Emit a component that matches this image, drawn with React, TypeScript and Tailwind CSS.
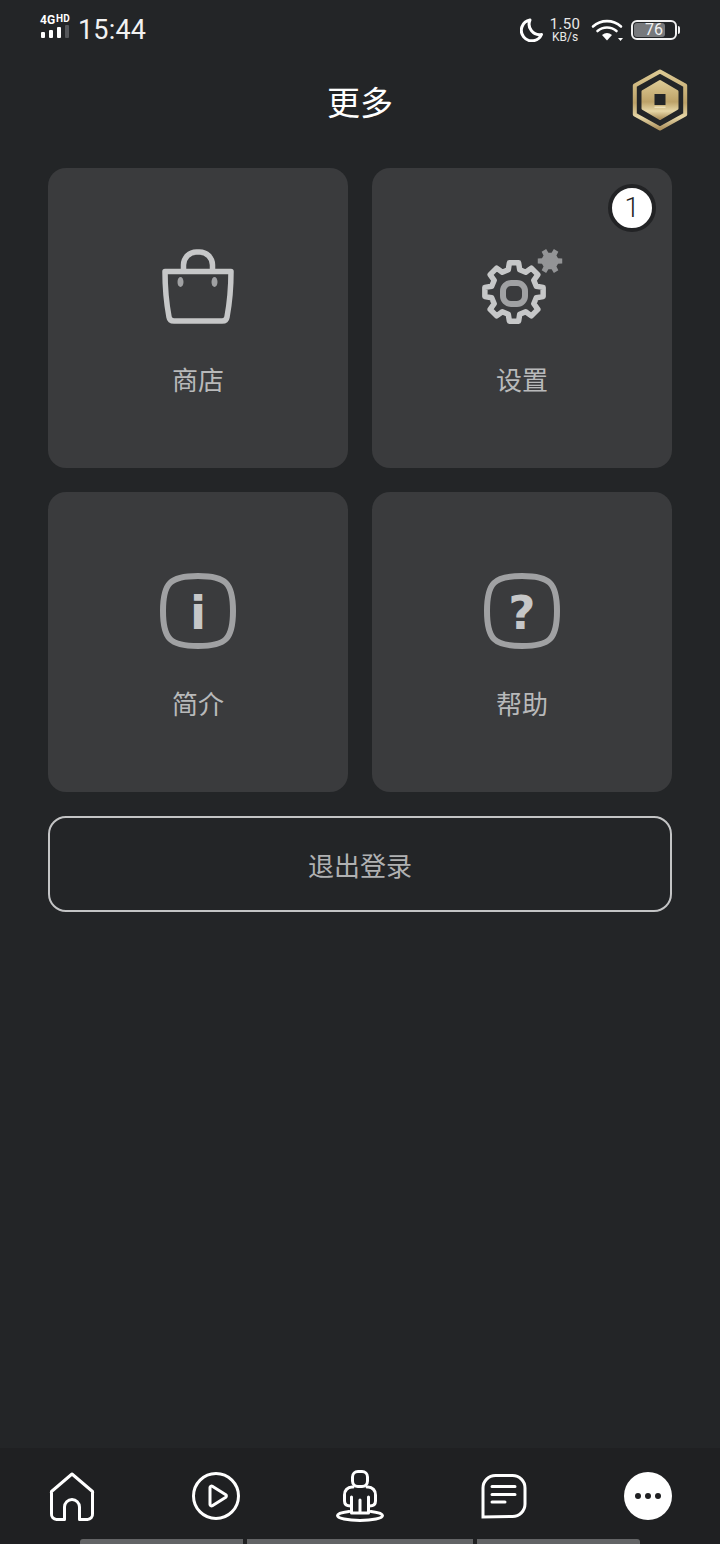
const cjk = "font-['Roboto','Noto_Sans_CJK_SC',sans-serif]"

// builds a cog outline: flat-topped teeth round a centre point
const cogPath = (cx: number, cy: number, outer: number, inner: number, teeth: number, start: number) => {
  const step = 360 / teeth
  const pt = (deg: number, r: number) => {
    const a = (deg * Math.PI) / 180
    return `${(cx + r * Math.cos(a)).toFixed(2)} ${(cy + r * Math.sin(a)).toFixed(2)}`
  }
  const parts: string[] = []
  for (let i = 0; i < teeth; i++) {
    const a = start + i * step
    parts.push(pt(a - step * 0.2, outer), pt(a + step * 0.2, outer), pt(a + step * 0.32, inner), pt(a + step * 0.68, inner))
  }
  return `M${parts.join('L')}Z`
}

const StatusBar = () => (
  <div className="flex h-14 items-center justify-between pt-[4px] pl-10 pr-10 text-white font-['Roboto',sans-serif]">
    <div className="flex items-center">
      <div className="mb-[8px] flex w-[31px] flex-col">
        <div className="flex h-[12px] items-end text-[12px] leading-none font-bold">
          4G<span className="mb-[2px] ml-[1px] text-[10px] leading-none">HD</span>
        </div>
        <div className="-mt-[1px] flex h-[13px] items-end gap-[4px] pl-[1px]">
          <span className="h-[6px] w-[4px] rounded-[1px] bg-white" />
          <span className="h-[8px] w-[4px] rounded-[1px] bg-white" />
          <span className="h-[11px] w-[4px] rounded-[1px] bg-white" />
          <span className="h-[13px] w-[4px] rounded-[1px] bg-[#55575a]" />
        </div>
      </div>
      <span className="ml-[7px] text-[27px] leading-none tracking-[0.2px] text-[#f2f2f2]">15:44</span>
    </div>
    <div className="flex items-center">
      <svg width="24" height="24" viewBox="0 0 24 24" className="mr-[5px]">
        <path d="M10 2a10.500 10.500 0 0 0 11.500 14.500A10.500 10.500 0 1 1 10 2Z" fill="none" stroke="#fff" strokeWidth="3" strokeLinejoin="round" />
      </svg>
      <div className="flex w-[32px] flex-col items-center text-center leading-none">
        <span className="text-[15px] leading-[14px] tracking-[0.3px] text-[#e8e8e8]">1.50</span>
        <span className="text-[12px] leading-[12px] text-[#e8e8e8]">KB/s</span>
      </div>
      <svg width="34" height="24" viewBox="0 0 34 24" className="ml-[10px]">
        <g fill="none" stroke="#fff" strokeWidth="2.6" strokeLinecap="round">
          <path d="M2 8.500a21 21 0 0 1 28 0" />
          <path d="M6.500 13a14.500 14.500 0 0 1 19 0" />
        </g>
        <path d="M11 17a8 8 0 0 1 10 0l-5 5.500Z" fill="#fff" />
        <path d="M27 20h5l-2.500 3Z" fill="#fff" />
      </svg>
      <div className="relative ml-[6px] flex h-[20px] w-[46px] items-center overflow-hidden rounded-[6px] border-2 border-[#f2f2f2] p-[1px]">
        <div className="h-full w-[31px] rounded-[3px] bg-[#77797c]" />
        <span className="absolute inset-0 flex items-center justify-center text-[16px] leading-none text-[#f2f2f2]">76</span>
      </div>
      <span className="ml-[1px] h-[8px] w-[2px] rounded-r-sm bg-[#f2f2f2]" />
    </div>
  </div>
)

const CoinIcon = () => (
  <svg width="58" height="64" viewBox="0 0 58 64">
    <defs>
      <linearGradient id="gold" x1="0" y1="0" x2="0" y2="1">
        <stop offset="0" stopColor="#dcc993" />
        <stop offset="0.55" stopColor="#bda268" />
        <stop offset="0.8" stopColor="#e6d6a6" />
        <stop offset="1" stopColor="#ae9360" />
      </linearGradient>
    </defs>
    <path d="M29 2.500 54.200 16.500V45.500L29 59.500 3.800 45.500V16.500Z" fill="none" stroke="url(#gold)" strokeWidth="4" strokeLinejoin="round" />
    <path d="M29 12.500 46 22.500V39.500L29 49.500 12 39.500V22.500Z" fill="url(#gold)" stroke="url(#gold)" strokeWidth="3" strokeLinejoin="round" />
    <rect x="23.500" y="25" width="11" height="11" fill="#232527" />
    <rect x="23.500" y="37.500" width="11" height="1.500" fill="#eee0b8" />
  </svg>
)

const BagIcon = () => (
  <svg width="72" height="80" viewBox="0 0 72 80" fill="none">
    <path d="M21.500 24v-6a13 13 0 0 1 13-13h3a13 13 0 0 1 13 13v6" stroke="#c6c7c8" strokeWidth="5.500" />
    <path d="M3 24.500h66c0 15-1.500 32-4 45.500-.4 2.600-2.300 4-4.800 4H12c-2.600 0-4.600-1.500-5-4-2.500-13.500-4-30.500-4-45.500Z" stroke="#c6c7c8" strokeWidth="5.500" strokeLinejoin="round" />
    <ellipse cx="18.500" cy="35" rx="3" ry="5" fill="#a0a1a3" />
    <ellipse cx="52.500" cy="35" rx="3" ry="5" fill="#a0a1a3" />
  </svg>
)

const GearIcon = () => (
  <svg width="84" height="80" viewBox="0 0 84 80" fill="none">
    <path d={cogPath(34, 45, 29.500, 23, 8, -90)} stroke="#c6c7c8" strokeWidth="5.500" strokeLinejoin="round" />
    <rect x="23" y="36" width="22" height="21" rx="8" stroke="#a0a1a3" strokeWidth="6" />
    <path d={cogPath(70, 14, 12.500, 8.500, 6, 0)} fill="#939496" strokeLinejoin="round" />
  </svg>
)

const SquircleIcon = ({ glyph }: { glyph: string }) => (
  <svg width="76" height="76" viewBox="0 0 76 76" fill="none">
    <path d="M38 3C66 3 73 10 73 38S66 73 38 73 3 66 3 38 10 3 38 3Z" stroke="#a0a1a3" strokeWidth="6" />
    <text x="38" y="56" textAnchor="middle" className="fill-[#c6c7c8] font-['DejaVu_Sans',sans-serif] text-[47px] font-bold">
      {glyph}
    </text>
  </svg>
)

const Card = ({ label, icon, badge }: { label: string; icon: React.ReactNode; badge?: string }) => (
  <div className="relative flex h-[300px] flex-col items-center rounded-[18px] bg-[#3a3b3d]">
    <div className="mt-[79px] flex h-[80px] items-center justify-center">{icon}</div>
    <span className={`mt-[36px] text-[26px] leading-[36px] text-[#b8b9ba] ${cjk}`}>{label}</span>
    {badge && (
      <span className="absolute top-[16px] right-[16px] flex h-[48px] w-[48px] items-center justify-center rounded-full border-[4px] border-[#222325] bg-white font-['Roboto',sans-serif] text-[27px] leading-none font-light text-[#222]">
        {badge}
      </span>
    )}
  </div>
)

const BottomNav = () => (
  <div className="flex h-[96px] flex-col bg-[#1f2022]">
    <div className="mt-[20px] flex h-[56px] items-center justify-between pl-[48px] pr-[48px]">
      <svg width="48" height="52" viewBox="0 0 48 52" fill="none" stroke="#fff" strokeWidth="3" strokeLinejoin="round">
        <path d="M24 4 44.500 21.500a3 3 0 0 1 0 2V44a5 5 0 0 1-5 5.500H31.500V37a7.500 7.500 0 0 0-15 0v12.500H8.500a5 5 0 0 1-5-5.500V23.500a3 3 0 0 1 0-2Z" />
      </svg>
      <svg width="48" height="48" viewBox="0 0 48 48" fill="none" stroke="#fff" strokeWidth="3" strokeLinejoin="round">
        <circle cx="24" cy="24" r="22.500" />
        <path d="M18 15.500v17a1.500 1.500 0 0 0 2.300 1.200l13.500-8.500a1.500 1.500 0 0 0 0-2.400l-13.500-8.500A1.500 1.500 0 0 0 18 15.500Z" />
      </svg>
      <svg width="48" height="52" viewBox="0 0 48 52" fill="none" stroke="#fff" strokeWidth="3" strokeLinejoin="round" strokeLinecap="round">
        <rect x="16.500" y="1.500" width="15" height="15" rx="5.500" />
        <path d="M17 17h-1a7.500 7.500 0 0 0-7.500 8v6c0 3 2 5 6 5M31 17h1a7.500 7.500 0 0 1 7.500 8v6c0 3-2 5-6 5" />
        <path d="M15.500 27v16h17V27M24 30v13" />
        <path d="M13 41.500C6 42.300 1.500 43.800 1.500 45.500c0 2.800 10 5 22.500 5s22.500-2.200 22.500-5c0-1.700-4.500-3.200-11.500-4" />
      </svg>
      <svg width="48" height="48" viewBox="0 0 48 48" fill="none" stroke="#fff" strokeWidth="3">
        <path d="M3 45V16A12.500 12.500 0 0 1 15.500 3.500h17A12.500 12.500 0 0 1 45 16v16a12.500 12.500 0 0 1-12.500 12.500Z" />
        <path d="M12 14.500h23M12 22.500h23M12 30h13" strokeLinecap="round" />
      </svg>
      <div className="flex h-[48px] w-[48px] items-center justify-center gap-[4px] rounded-full bg-white">
        <span className="h-[6px] w-[6px] rounded-full bg-[#1f2022]" />
        <span className="h-[6px] w-[6px] rounded-full bg-[#1f2022]" />
        <span className="h-[6px] w-[6px] rounded-full bg-[#1f2022]" />
      </div>
    </div>
    <div className="mt-auto flex h-[5px] gap-[4px] pl-[80px] pr-[80px]">
      <span className="w-[163px] rounded-tl-[3px] bg-[#636466]" />
      <span className="w-[226px] bg-[#636466]" />
      <span className="w-[163px] rounded-tr-[3px] bg-[#636466]" />
    </div>
  </div>
)

export default function App() {
  return (
    <div className={`flex h-[1544px] w-[720px] flex-col bg-[#232527] ${cjk}`}>
      <StatusBar />
      <header className="relative flex h-[88px] items-center justify-center">
        <h1 className="mt-[6px] text-[33px] leading-none font-normal text-white">更多</h1>
        <div className="absolute top-[13px] right-[31px]">
          <CoinIcon />
        </div>
      </header>
      <main className="mt-[24px] flex-1 pl-[48px] pr-[48px]">
        <div className="grid grid-cols-2 gap-[24px]">
          <Card label="商店" icon={<BagIcon />} />
          <Card label="设置" icon={<GearIcon />} badge="1" />
          <Card label="简介" icon={<SquircleIcon glyph="i" />} />
          <Card label="帮助" icon={<SquircleIcon glyph="?" />} />
        </div>
        <button
          type="button"
          className="mt-[24px] h-[96px] w-full rounded-[18px] border-2 border-[#c3c4c5] pt-[6px] text-[26px] text-[#b0b1b2]"
        >
          退出登录
        </button>
      </main>
      <BottomNav />
    </div>
  )
}
